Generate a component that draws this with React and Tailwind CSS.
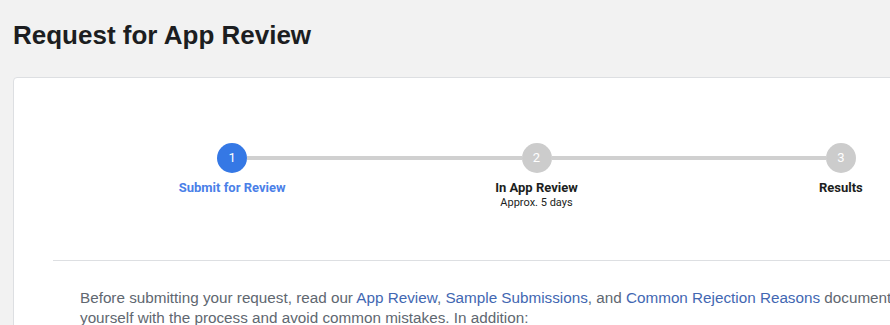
import React from 'react';

const steps = [
  { n: 1, title: 'Submit for Review', active: true },
  { n: 2, title: 'In App Review', sub: 'Approx. 5 days' },
  { n: 3, title: 'Results' },
];

const Step = ({ step, first, last }) => (
  <div className="flex flex-col items-center">
    <div className="flex w-full items-center">
      <div className={`h-[4px] flex-1 ${first ? 'bg-transparent' : 'bg-[#d0d0d0]'}`} />
      <div
        className={`flex h-[30px] w-[30px] items-center justify-center rounded-full text-[13px] text-white ${
          step.active ? 'bg-[#3578e5]' : 'bg-[#cccccc]'
        }`}
      >
        {step.n}
      </div>
      <div className={`h-[4px] flex-1 ${last ? 'bg-transparent' : 'bg-[#d0d0d0]'}`} />
    </div>
    <div
      className={`mt-[7px] text-[13px] font-bold leading-[16px] ${
        step.active ? 'text-[#4a80e8]' : 'text-[#1c1e21]'
      }`}
    >
      {step.title}
    </div>
    {step.sub && <div className="text-[11px] leading-[13px] text-[#1c1e21]">{step.sub}</div>}
  </div>
);

const App = () => {
  return (
    <div className="min-h-screen w-[890px] overflow-hidden bg-[#f2f2f2] pl-[13px] font-['Liberation_Sans',Arial,sans-serif]">
      <h1 className="pt-[19px] text-[26px] font-bold leading-[32px] text-[#1c1e21]">Request for App Review</h1>

      <div className="mt-[26px] w-[1000px] rounded-[4px] border border-[#dddfe2] bg-white px-[39px] pt-[65px] pb-[40px]">
        <div className="ml-[27px] grid w-[913px] grid-cols-3 font-['Roboto',Arial,sans-serif]">
          {steps.map((s, i) => (
            <Step key={s.n} step={s} first={i === 0} last={i === steps.length - 1} />
          ))}
        </div>

        <div className="mt-[51px] border-t border-[#dddfe2]" />

        <p className="mt-[27px] whitespace-nowrap pl-[27px] text-[15.25px] leading-[20px] text-[#606770]">
          Before submitting your request, read our <a className="text-[#4267b2]">App Review</a>,{' '}
          <a className="text-[#4267b2]">Sample Submissions</a>, and{' '}
          <a className="text-[#4267b2]">Common Rejection Reasons</a> documents to familiarize
          <br />
          yourself with the process and avoid common mistakes. In addition:
        </p>
      </div>
    </div>
  );
};

export default App;
